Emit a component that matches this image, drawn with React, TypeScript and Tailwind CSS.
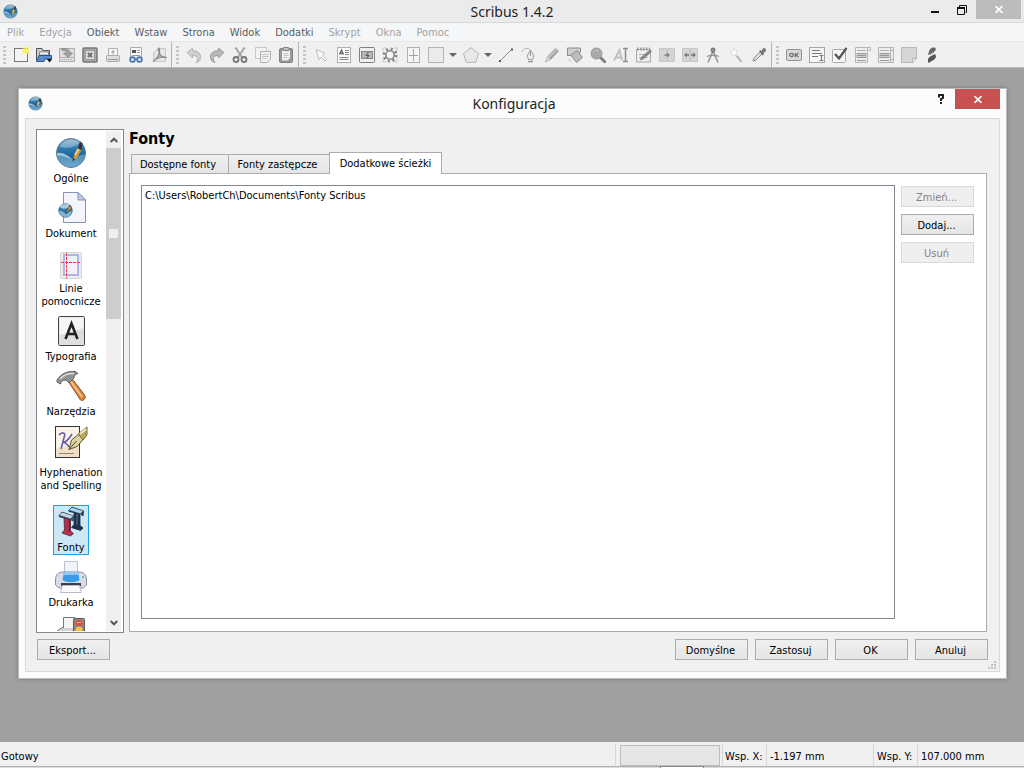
import { useState, ReactNode } from "react";

interface Tool {
  id: string;
  label: string;
  icon: ReactNode;
  menu?: boolean;
}

interface Section {
  id: string;
  label: string[];
  icon: ReactNode;
  tall?: boolean;
}

// ── Scribus globe, shared by the title bars and the section list ───────────────
function Globe({ className }: { className: string }) {
  return (
    <svg viewBox="0 0 32 32" className={className} aria-hidden="true">
      <defs>
        <linearGradient id="globe" x1="0" y1="0" x2="0" y2="1">
          <stop offset="0" stopColor="#7ea9c2" />
          <stop offset="0.35" stopColor="#2d79ac" />
          <stop offset="0.6" stopColor="#1a649a" />
          <stop offset="1" stopColor="#4694c4" />
        </linearGradient>
      </defs>
      <circle cx="16" cy="16" r="14.5" fill="url(#globe)" stroke="#54788f" />
      <path d="M2 16C7 15 13 18 17 22.5C20 20 25 17.5 30 17.5C29 25 24 30 16 30C8 30 2 24 2 16Z" fill="#8fc0dd" opacity="0.5" />
      <path d="M2 16C7 15 13 18 17 22.5C13 20.5 7 18.5 2 18.5Z" fill="#fff" opacity="0.45" />
      <path d="M4.5 9.5C8 4 13 2.5 17 2.5C20 2.5 23 3.5 25 5.5C19 11 10 12 4.5 9.5Z" fill="#fff" opacity="0.3" />
      <path d="M17.5 24.5L19.5 17L23 11L26.5 13L22.5 20Z" fill="#cf9638" />
      <path d="M19.5 17L23 11L24.5 12L20.5 19Z" fill="#f3d28a" />
      <path d="M22.8 11.5L25 4.5L27.5 6L26.8 13Z" fill="#3b332e" />
      <path d="M17.5 24.5L18.3 21L20 22.5Z" fill="#2b2622" />
    </svg>
  );
}

// ── Toolbar drawings, all on a 16 × 16 grid ────────────────────────────────────
const fileTools: Tool[] = [
  {
    id: "new",
    label: "Nowy",
    icon: (
      <>
        <rect x="1.5" y="1.5" width="13" height="13" fill="#f4f4f4" stroke="#777" />
        <circle cx="13" cy="3.5" r="4" fill="#f8f04a" opacity="0.6" />
        <circle cx="13" cy="3.5" r="2.2" fill="#fbf36b" />
      </>
    ),
  },
  {
    id: "open",
    label: "Otwórz",
    icon: (
      <>
        <path d="M0.500 13.500V1.500H6L7 3.500H13.500V8" fill="#c9c9c9" stroke="#555" />
        <path d="M3.500 5H12.500V8H3.500Z" fill="#f8f8f8" stroke="#888" />
        <path d="M0.500 14.500L3 8.500H15.500V12H9L8 14.500Z" fill="#5b8fc9" stroke="#2c578d" />
        <path d="M11 12H16L13.500 15.500Z" fill="#000" />
      </>
    ),
  },
  {
    id: "save",
    label: "Zapisz",
    icon: (
      <>
        <rect x="0.500" y="1.500" width="15" height="13" fill="#dedede" stroke="#b0b0b0" />
        <path d="M1 10.500H15" stroke="#b5b5b5" />
        <path d="M3 1.500C7 0.500 11 3 11 6H13.500L9 10.500L4.500 6H7.500C7.500 4 6 3 3 3.500Z" fill="#a2a2a2" stroke="#7d7d7d" strokeWidth="0.700" />
        <path d="M3 12.500H13" stroke="#aaa" strokeDasharray="1 1" />
      </>
    ),
  },
  {
    id: "close",
    label: "Zamknij",
    icon: (
      <>
        <rect x="1" y="1" width="14" height="14" rx="1" fill="#aaa" stroke="#777" strokeWidth="1.500" />
        <rect x="3.500" y="3.500" width="9" height="9" fill="#dcdcdc" stroke="#999" />
        <path d="M6 6L10 10M10 6L6 10" stroke="#707070" strokeWidth="2" />
      </>
    ),
  },
  {
    id: "print",
    label: "Drukuj",
    icon: (
      <>
        <path d="M3.500 9V1.500H12.500V9" fill="#f7f7f7" stroke="#b0b0b0" />
        <path d="M8 7.500V4M6.500 5.500L8 3.500L9.500 5.500" fill="none" stroke="#999" />
        <rect x="1.500" y="8.500" width="13" height="6" rx="1" fill="#ddd" stroke="#aaa" />
        <path d="M3 12.500H13" stroke="#999" />
      </>
    ),
  },
  {
    id: "preview",
    label: "Podgląd wydruku",
    icon: (
      <>
        <path d="M2.500 10V0.500H13.500V10" fill="#f7f7f7" stroke="#aaa" />
        <path d="M4 3H8V6H4Z" fill="#555" />
        <path d="M9 3.500H12M9 5.500H12M4 8.500H12" stroke="#999" />
        <circle cx="4.500" cy="12.500" r="2.400" fill="#d5e3f4" stroke="#4671ab" strokeWidth="1.600" />
        <circle cx="11.500" cy="12.500" r="2.400" fill="#d5e3f4" stroke="#4671ab" strokeWidth="1.600" />
        <path d="M6.500 12H9.500" stroke="#4671ab" />
      </>
    ),
  },
  {
    id: "pdf",
    label: "Zapisz jako PDF",
    icon: (
      <>
        <path d="M2.500 5.500V14.500H14.500V1.500H7Z" fill="#e5e5e5" stroke="#c8c8c8" />
        <path d="M2 14.500C6 12 9 7 8.500 2C8 0 6.500 2 8 5C9.500 9 12 11 15 10.500C13 9 7 10 2 14.500Z" fill="#b5b5b5" stroke="#8a8a8a" strokeWidth="1.200" />
      </>
    ),
  },
];

const editTools: Tool[] = [
  {
    id: "undo",
    label: "Cofnij",
    icon: <path d="M1 5.500L6.500 1V3.500C12 3.500 15.500 7 14.500 11.500C14 13.500 12.500 15 10 15.500C13 12 12 8.500 6.500 8.500V11Z" fill="#cfcfcf" stroke="#aaa" strokeWidth="0.800" />,
  },
  {
    id: "redo",
    label: "Ponów",
    icon: <path d="M15 5.500L9.500 1V3.500C4 3.500 0.500 7 1.500 11.500C2 13.500 3.500 15 6 15.500C3 12 4 8.500 9.500 8.500V11Z" fill="#b8b8b8" stroke="#929292" strokeWidth="0.800" />,
  },
  {
    id: "cut",
    label: "Wytnij",
    icon: (
      <>
        <path d="M3.500 0.500L10 10.500M12.500 0.500L6 10.500" stroke="#a5a5a5" strokeWidth="2" />
        <circle cx="4" cy="12.500" r="2.500" fill="none" stroke="#777" strokeWidth="1.800" />
        <circle cx="12" cy="12.500" r="2.500" fill="none" stroke="#777" strokeWidth="1.800" />
      </>
    ),
  },
  {
    id: "copy",
    label: "Kopiuj",
    icon: (
      <>
        <rect x="0.500" y="0.500" width="11" height="11" fill="#f2f2f2" stroke="#c8c8c8" />
        <path d="M5.500 4.500H15.500V12L12.500 15.500H5.500Z" fill="#f0f0f0" stroke="#b0b0b0" />
        <path d="M7 7.500H14M7 9.500H14M7 11.500H12" stroke="#c8c8c8" />
      </>
    ),
  },
  {
    id: "paste",
    label: "Wklej",
    icon: (
      <>
        <rect x="1.500" y="1.500" width="13" height="14" rx="1.500" fill="#999" stroke="#808080" />
        <path d="M4 3.500H12V11L9.500 13.500H4Z" fill="#f0f0f0" />
        <rect x="5" y="0.500" width="6" height="3" rx="1" fill="#c4c4c4" stroke="#808080" />
        <path d="M5.500 6.500H10.500M5.500 8.500H10.500M5.500 10.500H9" stroke="#c4c4c4" />
      </>
    ),
  },
];

const drawTools: Tool[] = [
  {
    id: "select",
    label: "Zaznacz element",
    icon: <path d="M3 2.500L12 6.500L9.500 8.500L13.500 12.500L12 14L8 10L6 12.500Z" fill="#fafafa" stroke="#bdbdbd" />,
  },
  {
    id: "text",
    label: "Wstaw ramkę tekstową",
    icon: (
      <>
        <rect x="1.500" y="0.500" width="13" height="15" fill="#fafafa" stroke="#b0b0b0" />
        <path d="M3.500 7.500L5.500 3L7.500 7.500M4 6.500H7" fill="none" stroke="#666" strokeWidth="1.300" />
        <path d="M9 3.500H13M9 5.500H13M9 7.500H13M3.500 10.500H12.500M3.500 12.500H12.500" stroke="#888" />
      </>
    ),
  },
  {
    id: "image",
    label: "Wstaw ramkę graficzną",
    icon: (
      <>
        <rect x="0.500" y="0.500" width="15" height="15" rx="1" fill="#eee" stroke="#808080" />
        <rect x="2.500" y="4.500" width="11" height="7" fill="#b5b5b5" stroke="#858585" />
        <path d="M9.500 5L7 8.500H10L8 11" fill="none" stroke="#555" />
      </>
    ),
  },
  {
    id: "render",
    label: "Wstaw ramkę renderowania",
    icon: (
      <>
        <path d="M1 4V1H4M12 1H15V4M15 12V15H12M4 15H1V12" fill="none" stroke="#c8c8c8" />
        <circle cx="8" cy="8" r="6" fill="none" stroke="#888" strokeWidth="3" strokeDasharray="2 2.712" />
        <circle cx="8" cy="8" r="4.200" fill="#f6f6f6" stroke="#888" strokeWidth="1.600" />
      </>
    ),
  },
  {
    id: "table",
    label: "Wstaw tabelę",
    icon: (
      <>
        <rect x="2.500" y="0.500" width="12" height="15" fill="#f5f5f5" stroke="#b0b0b0" />
        <path d="M4 8.500H13M8.500 2V14" stroke="#a5a5a5" />
      </>
    ),
  },
  {
    id: "shape",
    label: "Wstaw kształt",
    menu: true,
    icon: <rect x="0.500" y="0.500" width="15" height="15" fill="#ebebeb" stroke="#b5b5b5" />,
  },
  {
    id: "polygon",
    label: "Wstaw wielokąt",
    menu: true,
    icon: <path d="M8 0.700L15.500 6.500L12.700 15.300H3.300L0.500 6.500Z" fill="#e8e8e8" stroke="#b5b5b5" />,
  },
  {
    id: "line",
    label: "Wstaw linię",
    icon: (
      <>
        <path d="M3 13L13 3" stroke="#888" />
        <path d="M1 13H3V15H1ZM13 1.500H15V3.500H13Z" fill="#555" />
      </>
    ),
  },
  {
    id: "bezier",
    label: "Wstaw krzywą Béziera",
    icon: (
      <>
        <path d="M1 5C2 1 7 0.500 9.500 3" fill="none" stroke="#b5b5b5" />
        <path d="M9.500 3L13 9L11.500 12.500H7.500L6 9Z" fill="#ececec" stroke="#a0a0a0" />
        <path d="M9.500 4V9" stroke="#999" />
        <path d="M7 14.500H12" stroke="#999" strokeWidth="1.500" />
      </>
    ),
  },
  {
    id: "freehand",
    label: "Wstaw linię odręczną",
    icon: (
      <>
        <path d="M1.500 15L3.500 10L11.500 1.500L14.500 4L6.500 12.500Z" fill="#a8a8a8" stroke="#929292" strokeWidth="0.800" />
        <path d="M4.500 10.500L12.500 2.500" stroke="#cfcfcf" strokeWidth="1.200" />
        <path d="M1.500 15L3.500 10L6.500 12.500Z" fill="#d8d8d8" />
      </>
    ),
  },
  {
    id: "rotate",
    label: "Obróć element",
    icon: (
      <>
        <path d="M0.500 1H13.500V5L4 8.500H0.500Z" fill="#d0d0d0" stroke="#8c8c8c" />
        <path d="M3.500 8L10 3.500L15.500 10.500L9.500 15.500Z" fill="#bdbdbd" stroke="#8c8c8c" />
        <path d="M2 11V14H5" fill="none" stroke="#cfcfcf" />
      </>
    ),
  },
  {
    id: "zoom",
    label: "Powiększ lub pomniejsz",
    icon: (
      <>
        <path d="M10 10L15 15" stroke="#808080" strokeWidth="3" strokeLinecap="round" />
        <circle cx="6.500" cy="6.500" r="5.500" fill="#a9a9a9" stroke="#999" />
        <path d="M3 6C3.500 3.500 6.500 2.500 9 4" fill="none" stroke="#c5c5c5" />
      </>
    ),
  },
  {
    id: "contents",
    label: "Edytuj zawartość ramki",
    icon: (
      <>
        <path d="M1 13.500L6.500 3L9 13.500M3 10.500H8.500" fill="none" stroke="#c0c0c0" strokeWidth="2" />
        <path d="M10 1.500H15M12.500 1.500V14.500M10 14.500H15" fill="none" stroke="#8c8c8c" strokeWidth="1.500" />
      </>
    ),
  },
  {
    id: "story",
    label: "Edytuj tekst w edytorze",
    icon: (
      <>
        <rect x="0.500" y="2.500" width="14" height="12.500" fill="#eee" stroke="#a8a8a8" />
        <path d="M1 2H14" stroke="#999" strokeWidth="3" strokeDasharray="1.500 1.500" />
        <path d="M3 7.500H12M3 10.500H12" stroke="#b5b5b5" />
        <path d="M4 13L5.500 10L14 3L15.500 4.500L7.500 12Z" fill="#888" stroke="#777" strokeWidth="0.600" />
      </>
    ),
  },
  {
    id: "link",
    label: "Połącz ramki tekstowe",
    icon: (
      <>
        <path d="M0.500 1.500H7.500V14.500H0.500ZM8.500 1.500H15.500V14.500H8.500Z" fill="#d4d4d4" stroke="#c6c6c6" />
        <path d="M5.500 8H9.500" stroke="#808080" strokeWidth="1.500" />
        <path d="M8 5.500L11 8L8 10.500Z" fill="#808080" />
      </>
    ),
  },
  {
    id: "unlink",
    label: "Rozłącz ramki tekstowe",
    icon: (
      <>
        <path d="M0.500 1.500H7.500V14.500H0.500ZM8.500 1.500H15.500V14.500H8.500Z" fill="#d4d4d4" stroke="#c6c6c6" />
        <path d="M4 8H7M9 8H12" stroke="#777" strokeWidth="1.500" />
        <path d="M5 5.500L2 8L5 10.500ZM11 5.500L14 8L11 10.500Z" fill="#777" />
      </>
    ),
  },
  {
    id: "measure",
    label: "Pomiary",
    icon: (
      <>
        <path d="M8 4L3 15.500M8 4L13 15.500" stroke="#929292" strokeWidth="1.600" />
        <path d="M2 9.500C5 8 11 8 14 9.500" fill="none" stroke="#929292" strokeWidth="1.300" />
        <circle cx="8" cy="3" r="2" fill="#999" stroke="#666" />
      </>
    ),
  },
  {
    id: "wand",
    label: "Kopiuj właściwości elementu",
    icon: (
      <>
        <path d="M7 6.500L13.500 15" stroke="#b0b0b0" strokeWidth="2" />
        <path d="M6 1L7 4L10 3.500L8 6L9.500 9L6.500 7.500L4 9.500L4.500 6L2 4L5 4Z" fill="#fff" stroke="#d3d3d3" strokeWidth="0.600" />
      </>
    ),
  },
  {
    id: "picker",
    label: "Kroplomierz",
    icon: (
      <>
        <path d="M2 14L3 11L9 5L11 7L5 13Z" fill="#e0e0e0" stroke="#8a8a8a" />
        <path d="M8 4L9.500 3L10.500 4L12 1.500C13 0.500 15.500 1.500 15 4L12.500 6L13 7.500L11.500 8.500Z" fill="#777" />
      </>
    ),
  },
];

const pdfTools: Tool[] = [
  {
    id: "pdf-button",
    label: "Wstaw przycisk PDF",
    icon: (
      <>
        <rect x="0.500" y="2.500" width="15" height="11" rx="1.500" fill="#d8d8d8" stroke="#909090" />
        <ellipse cx="5.500" cy="8" rx="1.800" ry="1.600" fill="none" stroke="#707070" strokeWidth="1.300" />
        <path d="M9.300 6V10M12.500 6L10 8L12.500 10" fill="none" stroke="#707070" strokeWidth="1.300" />
      </>
    ),
  },
  {
    id: "pdf-text",
    label: "Wstaw pole tekstowe PDF",
    icon: (
      <>
        <rect x="0.500" y="0.500" width="15" height="15" fill="#f5f5f5" stroke="#a5a5a5" />
        <path d="M3 3.500H11M3 6.500H13M3 9.500H9M10.500 8.500H14.500M12.500 8.500V13.500M10.500 13.500H14.500" stroke="#777" />
      </>
    ),
  },
  {
    id: "pdf-check",
    label: "Wstaw pole wyboru PDF",
    icon: (
      <>
        <rect x="0.500" y="2.500" width="13" height="13" rx="1" fill="#f5f5f5" stroke="#aaa" />
        <path d="M3 7L7 11.500L14.500 1" fill="none" stroke="#555" strokeWidth="2.300" />
      </>
    ),
  },
  {
    id: "pdf-combo",
    label: "Wstaw pole kombi PDF",
    icon: (
      <>
        <path d="M0.500 0.500H15.500V3.500H12.500V15.500H0.500Z" fill="#eee" stroke="#b5b5b5" />
        <path d="M12.500 0.500V3.500M2 3.500H11" stroke="#b0b0b0" />
        <path d="M1 6H12V11H1Z" fill="#ccc" />
        <path d="M2 6.500H11M2 8.500H11M2 10.500H11M2 13.500H11" stroke="#999" />
      </>
    ),
  },
  {
    id: "pdf-list",
    label: "Wstaw listę PDF",
    icon: (
      <>
        <path d="M0.500 0.500H15.500V15.500H0.500Z" fill="#eee" stroke="#b5b5b5" />
        <path d="M12.500 0.500V15.500M12.500 3.500H15.500M12.500 12.500H15.500M2 3.500H11" stroke="#b0b0b0" />
        <path d="M1 6H12V11H1Z" fill="#ccc" />
        <path d="M2 6.500H11M2 8.500H11M2 10.500H11M2 13.500H11" stroke="#999" />
      </>
    ),
  },
  {
    id: "pdf-note",
    label: "Wstaw notatkę PDF",
    icon: (
      <>
        <path d="M0.500 0.500H15.500V12L12 15.500H0.500Z" fill="#d6d6d6" stroke="#b8b8b8" />
        <path d="M11.500 15.500V11.500H15.500" fill="#f0f0f0" stroke="#b5b5b5" />
      </>
    ),
  },
  {
    id: "pdf-link",
    label: "Wstaw odnośnik PDF",
    icon: (
      <>
        <path d="M5 5C5 2 8 0 10.500 0.500C12.500 1 12 3.500 10.500 4.500L8 5.500L7 7.500L4 7Z" fill="#666" />
        <path d="M4 13C4 10.500 7 9 9 8L11 7L12 9C12 12 9 13.500 7.500 14L5 16L4 15Z" fill="#555" />
        <path d="M4 7.500L10 5.500" stroke="#888" />
      </>
    ),
  },
];

const toolGroups: Tool[][] = [fileTools, editTools, drawTools, pdfTools];

// ── Preference sections ────────────────────────────────────────────────────────
function BigIcon({ children }: { children: ReactNode }) {
  return (
    <svg viewBox="0 0 32 32" className="size-8 shrink-0" aria-hidden="true">
      {children}
    </svg>
  );
}

const sections: Section[] = [
  { id: "general", label: ["Ogólne"], icon: <Globe className="size-8 shrink-0" /> },
  {
    id: "document",
    label: ["Dokument"],
    icon: (
      <BigIcon>
        <path d="M8.500 0.500H23L30.500 8V30.500H8.500Z" fill="#f3f4fc" stroke="#8292b8" />
        <path d="M23 0.500V8H30.500Z" fill="#c4cce4" stroke="#8292b8" />
        <circle cx="10.500" cy="18.500" r="6.700" fill="#2d79ac" stroke="#48718e" />
        <path d="M4.500 15C7 11 13 11 16 14C13 17 8 18 4.500 15Z" fill="#a9c8da" />
        <path d="M4 19C7 18.500 9 20 11 22C13 20 15 19.500 17 19.500C16 23 14 25 10.500 25C7 25 4 22 4 19Z" fill="#7fb5d6" />
        <path d="M11 22L12 18.500L15 13L16.500 16Z" fill="#d9a441" stroke="#3b332e" strokeWidth="0.700" />
      </BigIcon>
    ),
  },
  {
    id: "guides",
    label: ["Linie", "pomocnicze"],
    icon: (
      <BigIcon>
        <rect x="5.500" y="5.500" width="21" height="26" rx="1" fill="#ececec" stroke="#d3d3d3" />
        <rect x="9" y="8" width="14" height="20" fill="#f3f1f7" stroke="#b3b3ec" strokeWidth="2" />
        <path d="M11.500 6V31M6 15.500H26" stroke="#fbd0d2" />
        <path d="M11.500 6V31M6 15.500H26" stroke="#f23d48" strokeDasharray="3 1" />
      </BigIcon>
    ),
  },
  {
    id: "typography",
    label: ["Typografia"],
    icon: (
      <BigIcon>
        <rect x="3.500" y="1.500" width="26" height="29" rx="1" fill="#dedede" stroke="#444" />
        <path d="M4.500 2.500H28.500V13L4.500 20Z" fill="#f6f6f6" />
        <path d="M10.500 24L16.500 8.500L22.500 24M12.500 19H20.500" fill="none" stroke="#222" strokeWidth="2.600" />
      </BigIcon>
    ),
  },
  {
    id: "tools",
    label: ["Narzędzia"],
    icon: (
      <BigIcon>
        <path d="M13 11L17 8.500L30 25.500C31 29 28 31.500 25.500 30Z" fill="#d98237" stroke="#8e5a33" />
        <path d="M16 11.500L27 27" stroke="#f5c48d" strokeWidth="2" />
        <path d="M2 10C6 4 11 1 20 1.500L23 3.500C20 4 19 6 19 8L14 13L11 10C8 10 6 11 5.500 14L2 12Z" fill="#8f9290" stroke="#5e6260" />
        <path d="M5 9C9 4.500 13 3 19 3.500" fill="none" stroke="#dcdedd" strokeWidth="1.500" />
      </BigIcon>
    ),
  },
  {
    id: "hyphenation",
    label: ["Hyphenation", "and Spelling"],
    tall: true,
    icon: (
      <svg viewBox="0 0 34 34" className="size-[34px] shrink-0" aria-hidden="true">
        <rect x="1.500" y="1.500" width="24" height="31" fill="#f8f2e8" stroke="#333" />
        <path d="M2 24L25 18V32H2Z" fill="#f1dfc5" />
        <path d="M11 9L7 24M18 9C15 14 11 17 9.500 17.500C13 17 14 23 17 22M5 10C7 8 9 7 11 9" fill="none" stroke="#5b58a8" strokeWidth="1.500" />
        <path d="M5 28.500H20" stroke="#8d8680" />
        <path d="M15 24.500L17.500 15L25 9L29.500 14L23 21.500Z" fill="#ddd2a0" stroke="#5f5730" />
        <path d="M15 24.500L22.500 16" stroke="#4e482b" />
        <path d="M24 9L33 2V10L29 15Z" fill="#b8a45c" stroke="#7b6e3c" />
        <path d="M26 9L32 4" stroke="#f3ebc4" strokeWidth="2" />
      </svg>
    ),
  },
  {
    id: "fonts",
    label: ["Fonty"],
    icon: (
      <BigIcon>
        <path d="M19 7L25 8.500V19.500L28 22L25.500 24.500L16.500 21.500L19 18.500Z" fill="#1d334c" stroke="#14263a" strokeWidth="0.800" />
        <path d="M22 8V19" stroke="#4a6580" strokeWidth="1.500" />
        <path d="M13.500 4.500L17 1L28.500 5L28 10L25.500 8L14 5.500Z" fill="#2a425c" stroke="#14263a" strokeWidth="0.800" />
        <path d="M14 4L17 1.500L28 5L25.500 7.500Z" fill="#b3cbdc" />
        <path d="M9 12L15.500 13.500V25L18.500 27.500L15.500 30L7 27L9.500 24Z" fill="#b82f4e" stroke="#4a2a3d" strokeWidth="0.800" />
        <path d="M14.500 14V26" stroke="#5c2940" strokeWidth="1.500" />
        <path d="M4 9.500L7 6L18.500 10L18 15L15.500 13.500L4.500 11Z" fill="#3d5269" stroke="#2c3a4c" strokeWidth="0.800" />
        <path d="M4.500 9L7 6.500L18 10L15.500 12.500Z" fill="#c3d6e2" />
      </BigIcon>
    ),
  },
  {
    id: "printer",
    label: ["Drukarka"],
    icon: (
      <BigIcon>
        <path d="M9.500 13V0.500H22.500V13" fill="#f1f4fa" stroke="#b9c3d4" />
        <path d="M0.500 19C0.500 13 4 11 8 11H24C28 11 31.500 13 31.500 19V24L28 27H4L0.500 24Z" fill="#d9dbe6" stroke="#8b8e9f" />
        <path d="M9 11H23L24.500 19C21 22 11 22 7.500 19Z" fill="#3a9bea" />
        <path d="M9 11H23L23.500 14H8.500Z" fill="#8fc8f5" />
        <path d="M6 22H26V25H6Z" fill="#3c3e48" />
        <path d="M7.500 24.500H24.500L26.500 31.500H5.500Z" fill="#fafafa" stroke="#b9bcc6" />
        <circle cx="28" cy="16" r="1" fill="#45b5a0" />
      </BigIcon>
    ),
  },
  {
    // last entry, scrolled mostly out of view
    id: "preflight",
    label: [],
    icon: (
      <BigIcon>
        <path d="M2 15L8 11H20V32H2Z" fill="#d2d2d8" stroke="#77777d" />
        <path d="M8.500 12V1.500H20V12" fill="#f5f5f5" stroke="#77777d" />
        <rect x="18.500" y="2.500" width="11" height="29" rx="1" fill="#8d8883" stroke="#5c5855" />
        <ellipse cx="24" cy="7" rx="3.500" ry="2.700" fill="#e8452f" />
        <ellipse cx="24" cy="13.500" rx="3.500" ry="2.700" fill="#f5c643" />
        <path d="M22 6.500H26" stroke="#f9b2a5" />
      </BigIcon>
    ),
  },
];

const menus = [
  { label: "Plik", enabled: false },
  { label: "Edycja", enabled: false },
  { label: "Obiekt", enabled: true },
  { label: "Wstaw", enabled: true },
  { label: "Strona", enabled: true },
  { label: "Widok", enabled: true },
  { label: "Dodatki", enabled: true },
  { label: "Skrypt", enabled: false },
  { label: "Okna", enabled: false },
  { label: "Pomoc", enabled: false },
];

const tabs = ["Dostępne fonty", "Fonty zastępcze", "Dodatkowe ścieżki"];

function PushButton({ children, disabled }: { children: ReactNode; disabled?: boolean }) {
  return (
    <button
      type="button"
      disabled={disabled}
      className="h-[21px] w-[73px] shrink-0 border border-[#acacac] bg-linear-to-b from-[#f0f0f0] to-[#e5e5e5] pt-0.5 pr-0.5 text-center leading-4 disabled:border-[#d9d9d9] disabled:from-[#efefef] disabled:to-[#efefef] disabled:text-[#838383]"
    >
      {children}
    </button>
  );
}

function Toolbar() {
  return (
    <div className="flex h-[26px] shrink-0 items-center border-b border-[#b9b9b9] bg-[#f0f0f0] pl-[3px]" role="toolbar">
      {toolGroups.map((group, gi) => (
        <div key={gi} className="flex h-full items-center">
          <div className="mr-[3px] h-[18px] w-[3px] bg-[repeating-linear-gradient(to_bottom,#c4c4c4_0px,#c4c4c4_2px,transparent_2px,transparent_4px)]" />
          {group.map((tool) => (
            <div key={tool.id} className="flex">
              <button type="button" aria-label={tool.label} className="flex h-6 w-[23px] items-center justify-center">
                <svg viewBox="0 0 16 16" className="size-4" aria-hidden="true">
                  {tool.icon}
                </svg>
              </button>
              {tool.menu && (
                <button type="button" aria-label={`${tool.label}: opcje`} className="flex h-6 w-3 items-center justify-center">
                  <svg viewBox="0 0 8 4" className="h-1 w-2" aria-hidden="true">
                    <path d="M0 0H8L4 4Z" fill="#666" />
                  </svg>
                </button>
              )}
            </div>
          ))}
          {gi < toolGroups.length - 1 && <div className="mr-1 ml-px h-full w-px bg-[#b4b4b4]" />}
        </div>
      ))}
    </div>
  );
}

function SectionList({ current, onSelect }: { current: string; onSelect: (id: string) => void }) {
  return (
    <div className="flex w-[88px] shrink-0 overflow-hidden border border-[#828790] bg-white py-px pr-0.5">
      <nav className="flex min-w-0 flex-1 flex-col items-center gap-[5px] overflow-hidden pt-[5px] pr-px">
        {sections.map((s) => (
          <button
            key={s.id}
            type="button"
            aria-label={s.label.join(" ") || s.id}
            onClick={() => onSelect(s.id)}
            className={`flex shrink-0 flex-col items-center border px-px ${s.tall ? "pb-[7px]" : ""} ${
              s.id === current ? "border-[#26a0da] bg-[#cbe8f6]" : "border-transparent"
            }`}
          >
            <span className={`flex items-start ${s.tall ? "h-[41px]" : "h-[35px]"}`}>{s.icon}</span>
            {s.label.map((line) => (
              <span key={line} className="leading-[13px] whitespace-nowrap">{line}</span>
            ))}
          </button>
        ))}
      </nav>
      <div className="flex w-[15px] shrink-0 flex-col bg-[#f0f0f0]">
        <button type="button" aria-label="W górę" className="flex h-[17px] shrink-0 items-center justify-center">
          <svg viewBox="0 0 8 6" className="h-1.5 w-2" aria-hidden="true">
            <path d="M0.700 5L4 1.700L7.300 5" fill="none" stroke="#555" strokeWidth="2" />
          </svg>
        </button>
        <div className="flex min-h-0 flex-1 flex-col">
          <div className="flex h-[171px] items-center justify-center bg-[#cdcdcd]">
            <div className="size-[9px] bg-[#f0f0f0]" />
          </div>
        </div>
        <button type="button" aria-label="W dół" className="flex h-[17px] shrink-0 items-center justify-center">
          <svg viewBox="0 0 8 6" className="h-1.5 w-2" aria-hidden="true">
            <path d="M0.700 1L4 4.300L7.300 1" fill="none" stroke="#555" strokeWidth="2" />
          </svg>
        </button>
      </div>
    </div>
  );
}

function PreferencesDialog() {
  const [section, setSection] = useState("fonts");
  const [tab, setTab] = useState(2);

  return (
    <div
      role="dialog"
      aria-labelledby="dialog-title"
      className="flex min-h-0 flex-1 flex-col border border-[#bdbdbd] bg-[#fcfcfc] px-1.5 pb-1.5 shadow-[0_0_4px_rgba(0,0,0,0.25)]"
    >
      <div className="flex h-[29px] shrink-0 items-center">
        <div className="flex flex-1 pl-[3px]">
          <Globe className="size-[15px]" />
        </div>
        <h1 id="dialog-title" className="font-['Noto_Sans',sans-serif] text-sm leading-5 text-[#222]">Konfiguracja</h1>
        <div className="flex flex-1 items-start justify-end self-stretch">
          <button type="button" aria-label="Pomoc" className="flex h-5 w-[29px] items-center justify-center">
            <svg viewBox="0 0 8 10" className="h-2.5 w-2" aria-hidden="true">
              <path d="M2 3.500V1H6V4L4 5V7" fill="none" stroke="#222" strokeWidth="2" />
              <path d="M3 8H5V10H3Z" fill="#222" />
            </svg>
          </button>
          <button type="button" aria-label="Zamknij" className="flex h-5 w-[45px] items-center justify-center bg-[#c75050]">
            <svg viewBox="0 0 8 7" className="h-[7px] w-2" aria-hidden="true">
              <path d="M0.500 0L7.500 7M7.500 0L0.500 7" stroke="#fff" strokeWidth="1.600" />
            </svg>
          </button>
        </div>
      </div>

      <div className="flex min-h-0 flex-1 flex-col border border-[#d9d9d9] bg-[#f0f0f0] pt-2.5 pl-2.5">
        <div className="flex min-h-0 flex-1 gap-[5px] pr-3">
          <SectionList current={section} onSelect={setSection} />

          <div className="flex min-w-0 flex-1 flex-col pb-px">
            <h2 className="h-[23px] shrink-0 text-base leading-5 font-bold">Fonty</h2>
            <div role="tablist" className="z-10 -mb-px flex h-[22px] shrink-0 items-end pl-0.5">
              {tabs.map((label, i) => (
                <button
                  key={label}
                  type="button"
                  role="tab"
                  aria-selected={tab === i}
                  onClick={() => setTab(i)}
                  className={
                    tab === i
                      ? "-ml-px h-[22px] w-[113px] border border-b-0 border-[#acacac] bg-white pt-px leading-4"
                      : "-mr-px h-5 w-[103px] border border-[#acacac] bg-linear-to-b from-[#f0f0f0] to-[#e5e5e5] pt-0.5 pr-1 leading-4 first:w-[98px]"
                  }
                >
                  {label}
                </button>
              ))}
            </div>
            <div role="tabpanel" className="flex min-h-0 flex-1 gap-1.5 border border-[#acacac] bg-white pt-[11px] pr-3 pb-3 pl-[11px]">
              <ul role="listbox" aria-label={tabs[tab]} className="min-w-0 flex-1 border border-[#828790] px-[3px] py-0.5">
                <li role="option" aria-selected={false} className="leading-4">C:\Users\RobertCh\Documents\Fonty Scribus</li>
              </ul>
              <div className="flex flex-col gap-[7px] pt-px">
                <PushButton disabled>Zmień...</PushButton>
                <PushButton>Dodaj...</PushButton>
                <PushButton disabled>Usuń</PushButton>
              </div>
            </div>
          </div>
        </div>

        <div className="flex shrink-0 gap-[7px] pt-1.5 pr-[11px] pl-px">
          <PushButton>Eksport...</PushButton>
          <div className="flex-1" />
          <PushButton>Domyślne</PushButton>
          <PushButton>Zastosuj</PushButton>
          <PushButton>OK</PushButton>
          <PushButton>Anuluj</PushButton>
        </div>
        <div className="flex h-[11px] shrink-0 items-end justify-end pr-[3px] pb-0.5">
          <svg viewBox="0 0 8 8" className="size-2" aria-hidden="true">
            <path d="M6 0H8V2H6ZM3 3H5V5H3ZM6 3H8V5H6ZM0 6H2V8H0ZM3 6H5V8H3ZM6 6H8V8H6Z" fill="#bfbfbf" />
          </svg>
        </div>
      </div>
    </div>
  );
}

function StatusBar() {
  return (
    <footer className="relative shrink-0 bg-[#dcdcdc] pb-px">
      <div className="flex h-[25px] border-b border-[#b0b0b0] bg-[#f0f0f0] pt-0.5">
        <span className="flex-1 border-r border-[#d7d7d7] pt-px pl-px leading-6">Gotowy</span>
        <div className="flex w-[107px] justify-end border-r border-[#d7d7d7] pt-px pr-0.5">
          <div className="w-[100px] border border-[#bcbcbc] bg-[#e6e6e6]" />
        </div>
        <span className="w-11 border-r border-[#d7d7d7] pt-px pl-0.5 leading-6">Wsp. X:</span>
        <span className="w-[107px] border-r border-[#d7d7d7] pt-px pl-[3px] leading-6">-1.197 mm</span>
        <span className="w-11 border-r border-[#d7d7d7] pt-px pl-[3px] leading-6">Wsp. Y:</span>
        <span className="w-[106px] pt-px pl-[3px] leading-6">107.000 mm</span>
      </div>
      {/* top edge of the taskbar preview that peeks over the window */}
      <div className="absolute right-[320px] bottom-0 h-0.5 w-11 border border-b-0 border-[#8a8a8a] bg-white" />
    </footer>
  );
}

export default function App() {
  return (
    <div className="flex h-screen flex-col overflow-hidden bg-[#a0a0a0] font-['DejaVu_Sans_Condensed',sans-serif] text-[11px] text-black">
      <header className="flex h-[23px] shrink-0 items-center border-b border-[#d6d9dc] bg-[#ebebeb] pt-px">
        <div className="flex flex-1 pl-[3px]">
          <Globe className="size-[15px]" />
        </div>
        <div className="font-['Noto_Sans',sans-serif] text-sm leading-5 text-[#222]">Scribus 1.4.2</div>
        <div className="-mt-px flex flex-1 items-start justify-end self-stretch pr-[3px]">
          <button type="button" aria-label="Minimalizuj" className="flex h-[19px] w-[26px] items-center justify-center">
            <svg viewBox="0 0 8 8" className="size-2" aria-hidden="true">
              <path d="M0 5H8V7H0Z" fill="#111" />
            </svg>
          </button>
          <button type="button" aria-label="Przywróć" className="flex h-[19px] w-7 items-center justify-center">
            <svg viewBox="0 0 10 10" className="size-2.5" aria-hidden="true">
              <path d="M2.500 2V0.500H9.500V7.500H8.500" fill="none" stroke="#111" />
              <path d="M0.500 3H7.500V9.500H0.500Z" fill="none" stroke="#111" />
              <path d="M0 2H8V4H0Z" fill="#111" />
            </svg>
          </button>
          <button type="button" aria-label="Zamknij" className="flex h-[19px] w-[45px] items-center justify-center bg-[#bcbcbc]">
            <svg viewBox="0 0 8 7" className="h-[7px] w-2" aria-hidden="true">
              <path d="M0.500 0L7.500 7M7.500 0L0.500 7" stroke="#fff" strokeWidth="1.600" />
            </svg>
          </button>
        </div>
      </header>

      <nav className="flex h-[19px] shrink-0 items-center border-b border-[#e5e7ea] bg-[#f5f6f8]">
        {menus.map((m) => (
          <button key={m.label} type="button" disabled={!m.enabled} className="pt-0.5 pr-2 pl-[7px] leading-4 text-[#5c5c5c] disabled:text-[#a3a3a3]">
            {m.label}
          </button>
        ))}
      </nav>

      <Toolbar />

      <main className="flex min-h-0 flex-1 flex-col pt-5 pr-[17px] pb-[63px] pl-[18px]">
        <PreferencesDialog />
      </main>

      <StatusBar />
    </div>
  );
}
